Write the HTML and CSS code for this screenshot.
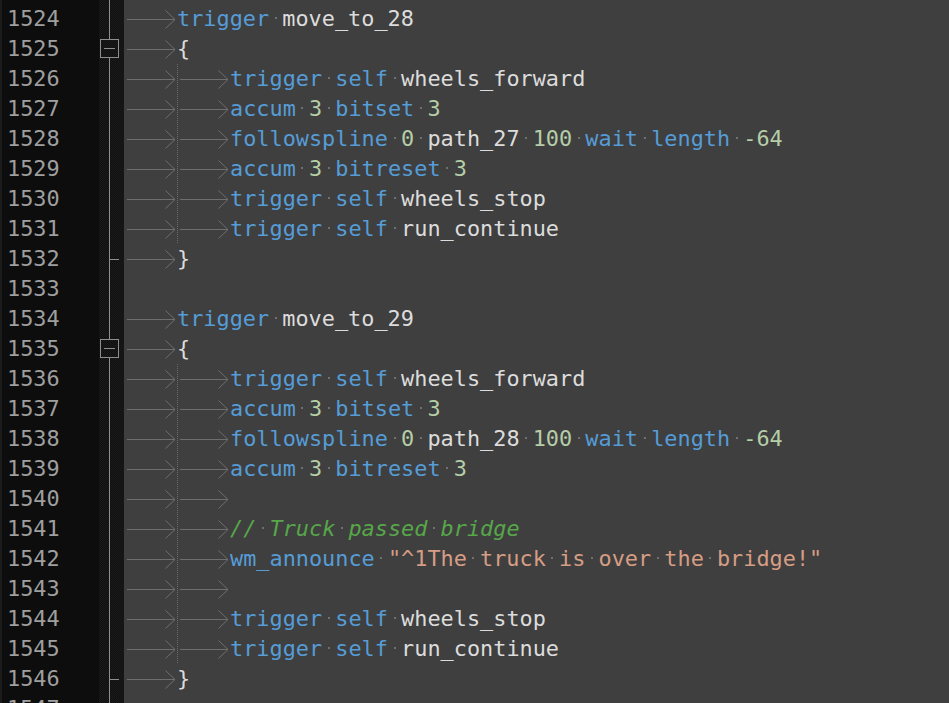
FILE: index.html
```html
<!DOCTYPE html>
<html>
<head>
<meta charset="utf-8">
<link rel="stylesheet" href="styles.css">
</head>
<body>
<div class="editor">
  <div class="gutter">
    <div class="ln">1524</div><div class="ln">1525</div><div class="ln">1526</div><div class="ln">1527</div>
    <div class="ln">1528</div><div class="ln">1529</div><div class="ln">1530</div><div class="ln">1531</div>
    <div class="ln">1532</div><div class="ln">1533</div><div class="ln">1534</div><div class="ln">1535</div>
    <div class="ln">1536</div><div class="ln">1537</div><div class="ln">1538</div><div class="ln">1539</div>
    <div class="ln">1540</div><div class="ln">1541</div><div class="ln">1542</div><div class="ln">1543</div>
    <div class="ln">1544</div><div class="ln">1545</div><div class="ln">1546</div><div class="ln">1547</div>
  </div>
  <div class="fold">
    <div class="fc"></div>
    <div class="fc"><div class="box"><div class="minus"></div></div></div>
    <div class="fc"></div><div class="fc"></div><div class="fc"></div><div class="fc"></div><div class="fc"></div><div class="fc"></div>
    <div class="fc"><div class="tick"></div></div>
    <div class="fc"></div>
    <div class="fc"></div>
    <div class="fc"><div class="box"><div class="minus"></div></div></div>
    <div class="fc"></div><div class="fc"></div><div class="fc"></div><div class="fc"></div><div class="fc"></div>
    <div class="fc"></div><div class="fc"></div><div class="fc"></div><div class="fc"></div><div class="fc"></div>
    <div class="fc"><div class="tick"></div></div>
    <div class="fc"></div>
  </div>
  <div class="sep"></div>
  <div class="code">
    <div class="row"><span class="tab"><svg width="53" height="30"><path d="M3 15.5H51M41.5 6.5L51 15.5L41.5 24.5"/></svg></span><span class="kw">trigger</span><span class="sp"> </span><span class="id">move_to_28</span></div>
    <div class="row"><span class="tab"><svg width="53" height="30"><path d="M3 15.5H51M41.5 6.5L51 15.5L41.5 24.5"/></svg></span><span class="br">{</span></div>
    <div class="row"><span class="tab"><svg width="53" height="30"><path d="M3 15.5H51M41.5 6.5L51 15.5L41.5 24.5"/></svg></span><span class="tab guide"><svg width="53" height="30"><path d="M3 15.5H51M41.5 6.5L51 15.5L41.5 24.5"/></svg></span><span class="kw">trigger</span><span class="sp"> </span><span class="kw">self</span><span class="sp"> </span><span class="id">wheels_forward</span></div>
    <div class="row"><span class="tab"><svg width="53" height="30"><path d="M3 15.5H51M41.5 6.5L51 15.5L41.5 24.5"/></svg></span><span class="tab guide"><svg width="53" height="30"><path d="M3 15.5H51M41.5 6.5L51 15.5L41.5 24.5"/></svg></span><span class="kw">accum</span><span class="sp"> </span><span class="num">3</span><span class="sp"> </span><span class="kw">bitset</span><span class="sp"> </span><span class="num">3</span></div>
    <div class="row"><span class="tab"><svg width="53" height="30"><path d="M3 15.5H51M41.5 6.5L51 15.5L41.5 24.5"/></svg></span><span class="tab guide"><svg width="53" height="30"><path d="M3 15.5H51M41.5 6.5L51 15.5L41.5 24.5"/></svg></span><span class="kw">followspline</span><span class="sp"> </span><span class="num">0</span><span class="sp"> </span><span class="id">path_27</span><span class="sp"> </span><span class="num">100</span><span class="sp"> </span><span class="kw">wait</span><span class="sp"> </span><span class="kw">length</span><span class="sp"> </span><span class="num">-64</span></div>
    <div class="row"><span class="tab"><svg width="53" height="30"><path d="M3 15.5H51M41.5 6.5L51 15.5L41.5 24.5"/></svg></span><span class="tab guide"><svg width="53" height="30"><path d="M3 15.5H51M41.5 6.5L51 15.5L41.5 24.5"/></svg></span><span class="kw">accum</span><span class="sp"> </span><span class="num">3</span><span class="sp"> </span><span class="kw">bitreset</span><span class="sp"> </span><span class="num">3</span></div>
    <div class="row"><span class="tab"><svg width="53" height="30"><path d="M3 15.5H51M41.5 6.5L51 15.5L41.5 24.5"/></svg></span><span class="tab guide"><svg width="53" height="30"><path d="M3 15.5H51M41.5 6.5L51 15.5L41.5 24.5"/></svg></span><span class="kw">trigger</span><span class="sp"> </span><span class="kw">self</span><span class="sp"> </span><span class="id">wheels_stop</span></div>
    <div class="row"><span class="tab"><svg width="53" height="30"><path d="M3 15.5H51M41.5 6.5L51 15.5L41.5 24.5"/></svg></span><span class="tab guide"><svg width="53" height="30"><path d="M3 15.5H51M41.5 6.5L51 15.5L41.5 24.5"/></svg></span><span class="kw">trigger</span><span class="sp"> </span><span class="kw">self</span><span class="sp"> </span><span class="id">run_continue</span></div>
    <div class="row"><span class="tab"><svg width="53" height="30"><path d="M3 15.5H51M41.5 6.5L51 15.5L41.5 24.5"/></svg></span><span class="br">}</span></div>
    <div class="row"></div>
    <div class="row"><span class="tab"><svg width="53" height="30"><path d="M3 15.5H51M41.5 6.5L51 15.5L41.5 24.5"/></svg></span><span class="kw">trigger</span><span class="sp"> </span><span class="id">move_to_29</span></div>
    <div class="row"><span class="tab"><svg width="53" height="30"><path d="M3 15.5H51M41.5 6.5L51 15.5L41.5 24.5"/></svg></span><span class="br">{</span></div>
    <div class="row"><span class="tab"><svg width="53" height="30"><path d="M3 15.5H51M41.5 6.5L51 15.5L41.5 24.5"/></svg></span><span class="tab guide"><svg width="53" height="30"><path d="M3 15.5H51M41.5 6.5L51 15.5L41.5 24.5"/></svg></span><span class="kw">trigger</span><span class="sp"> </span><span class="kw">self</span><span class="sp"> </span><span class="id">wheels_forward</span></div>
    <div class="row"><span class="tab"><svg width="53" height="30"><path d="M3 15.5H51M41.5 6.5L51 15.5L41.5 24.5"/></svg></span><span class="tab guide"><svg width="53" height="30"><path d="M3 15.5H51M41.5 6.5L51 15.5L41.5 24.5"/></svg></span><span class="kw">accum</span><span class="sp"> </span><span class="num">3</span><span class="sp"> </span><span class="kw">bitset</span><span class="sp"> </span><span class="num">3</span></div>
    <div class="row"><span class="tab"><svg width="53" height="30"><path d="M3 15.5H51M41.5 6.5L51 15.5L41.5 24.5"/></svg></span><span class="tab guide"><svg width="53" height="30"><path d="M3 15.5H51M41.5 6.5L51 15.5L41.5 24.5"/></svg></span><span class="kw">followspline</span><span class="sp"> </span><span class="num">0</span><span class="sp"> </span><span class="id">path_28</span><span class="sp"> </span><span class="num">100</span><span class="sp"> </span><span class="kw">wait</span><span class="sp"> </span><span class="kw">length</span><span class="sp"> </span><span class="num">-64</span></div>
    <div class="row"><span class="tab"><svg width="53" height="30"><path d="M3 15.5H51M41.5 6.5L51 15.5L41.5 24.5"/></svg></span><span class="tab guide"><svg width="53" height="30"><path d="M3 15.5H51M41.5 6.5L51 15.5L41.5 24.5"/></svg></span><span class="kw">accum</span><span class="sp"> </span><span class="num">3</span><span class="sp"> </span><span class="kw">bitreset</span><span class="sp"> </span><span class="num">3</span></div>
    <div class="row"><span class="tab"><svg width="53" height="30"><path d="M3 15.5H51M41.5 6.5L51 15.5L41.5 24.5"/></svg></span><span class="tab guide"><svg width="53" height="30"><path d="M3 15.5H51M41.5 6.5L51 15.5L41.5 24.5"/></svg></span></div>
    <div class="row"><span class="tab"><svg width="53" height="30"><path d="M3 15.5H51M41.5 6.5L51 15.5L41.5 24.5"/></svg></span><span class="tab guide"><svg width="53" height="30"><path d="M3 15.5H51M41.5 6.5L51 15.5L41.5 24.5"/></svg></span><span class="cm">//</span><span class="sp"> </span><span class="cm">Truck</span><span class="sp"> </span><span class="cm">passed</span><span class="sp"> </span><span class="cm">bridge</span></div>
    <div class="row"><span class="tab"><svg width="53" height="30"><path d="M3 15.5H51M41.5 6.5L51 15.5L41.5 24.5"/></svg></span><span class="tab guide"><svg width="53" height="30"><path d="M3 15.5H51M41.5 6.5L51 15.5L41.5 24.5"/></svg></span><span class="kw">wm_announce</span><span class="sp"> </span><span class="str">"^1The</span><span class="sp"> </span><span class="str">truck</span><span class="sp"> </span><span class="str">is</span><span class="sp"> </span><span class="str">over</span><span class="sp"> </span><span class="str">the</span><span class="sp"> </span><span class="str">bridge!"</span></div>
    <div class="row"><span class="tab"><svg width="53" height="30"><path d="M3 15.5H51M41.5 6.5L51 15.5L41.5 24.5"/></svg></span><span class="tab guide"><svg width="53" height="30"><path d="M3 15.5H51M41.5 6.5L51 15.5L41.5 24.5"/></svg></span></div>
    <div class="row"><span class="tab"><svg width="53" height="30"><path d="M3 15.5H51M41.5 6.5L51 15.5L41.5 24.5"/></svg></span><span class="tab guide"><svg width="53" height="30"><path d="M3 15.5H51M41.5 6.5L51 15.5L41.5 24.5"/></svg></span><span class="kw">trigger</span><span class="sp"> </span><span class="kw">self</span><span class="sp"> </span><span class="id">wheels_stop</span></div>
    <div class="row"><span class="tab"><svg width="53" height="30"><path d="M3 15.5H51M41.5 6.5L51 15.5L41.5 24.5"/></svg></span><span class="tab guide"><svg width="53" height="30"><path d="M3 15.5H51M41.5 6.5L51 15.5L41.5 24.5"/></svg></span><span class="kw">trigger</span><span class="sp"> </span><span class="kw">self</span><span class="sp"> </span><span class="id">run_continue</span></div>
    <div class="row"><span class="tab"><svg width="53" height="30"><path d="M3 15.5H51M41.5 6.5L51 15.5L41.5 24.5"/></svg></span><span class="br">}</span></div>
    <div class="row"></div>
  </div>
</div>
</body>
</html>
```

FILE: styles.css
```css
html, body {
  margin: 0;
  padding: 0;
  background: #3f3f3f;
  overflow: hidden;
  height: 703px;
}

.editor {
  display: flex;
  height: 703px;
  font-family: "DejaVu Sans Mono", "Liberation Mono", monospace;
  font-size: 21.87px;
  line-height: 30px;
}

.gutter {
  width: 92px;
  flex: none;
  background: #0d0d0d;
  border-left: 2px solid #1b1b1b;
  padding: 4px 0 0 5px;
  color: #9f9f9f;
  overflow: hidden;
}

.ln {
  height: 30px;
}

.fold {
  width: 21px;
  flex: none;
  padding-top: 4px;
  background:
    linear-gradient(#8e8e8e, #8e8e8e) 10px 0 / 1px 100% no-repeat,
    repeating-conic-gradient(#1b1b1b 0 25%, #0f0f0f 0 50%) 0 0 / 2px 2px;
  overflow: hidden;
}

.fc {
  height: 30px;
  position: relative;
}

.box {
  position: absolute;
  left: 1px;
  top: 5px;
  width: 17px;
  height: 17px;
  border: 1px solid #8e8e8e;
  background: repeating-conic-gradient(#1b1b1b 0 25%, #0f0f0f 0 50%) 0 0 / 2px 2px;
  display: flex;
  align-items: center;
  justify-content: center;
}

.minus {
  width: 11px;
  height: 1px;
  background: #8e8e8e;
}

.tick {
  position: absolute;
  left: 11px;
  top: 15px;
  width: 9px;
  height: 1px;
  background: #8e8e8e;
}

.sep {
  width: 4px;
  flex: none;
  background: #151515;
}

.code {
  flex: 1;
  padding-top: 4px;
  background: #3f3f3f;
  overflow: hidden;
}

.row {
  height: 30px;
  white-space: pre;
  display: flex;
  align-items: flex-start;
}

.tab {
  display: inline-block;
  width: 53px;
  height: 30px;
  flex: none;
}

.tab svg {
  display: block;
}

.tab path {
  fill: none;
  stroke: #6e6e6e;
  stroke-width: 1;
}

.guide {
  background: linear-gradient(to bottom, #6a6a6a 50%, transparent 50%) 0 0 / 1px 2px repeat-y;
}

.sp {
  display: inline-block;
  width: 1ch;
  height: 30px;
  flex: none;
  background: linear-gradient(#707070, #707070) center 13px / 2px 2px no-repeat;
}

.kw { color: #569cd6; }
.id { color: #dcdcdc; }
.num { color: #b5cea8; }
.br { color: #dcdcdc; }
.cm { color: #57a64a; font-style: italic; }
.str { color: #d69d85; }
```
